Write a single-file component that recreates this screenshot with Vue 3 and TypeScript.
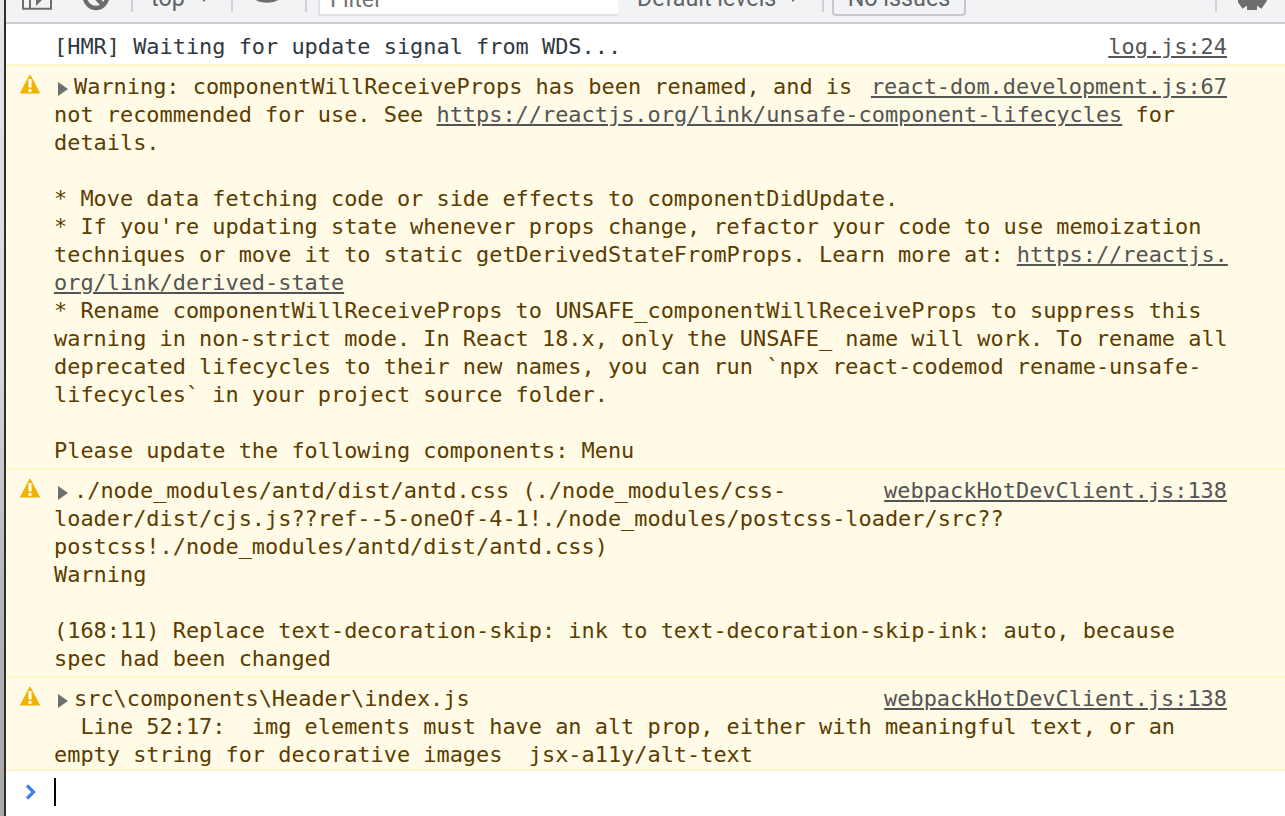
<script setup lang="ts">
interface Row {
  warn: boolean
  arrow: boolean
  source: string
  lines: string[]
}

const rows: Row[] = [
  { warn: false, arrow: false, source: 'log.js:24', lines: ['[HMR] Waiting for update signal from WDS...'] },
  {
    warn: true,
    arrow: true,
    source: 'react-dom.development.js:67',
    lines: [
      'Warning: componentWillReceiveProps has been renamed, and is',
      'not recommended for use. See <u>https://reactjs.org/link/unsafe-component-lifecycles</u> for',
      'details.',
      '',
      '* Move data fetching code or side effects to componentDidUpdate.',
      "* If you're updating state whenever props change, refactor your code to use memoization",
      'techniques or move it to static getDerivedStateFromProps. Learn more at: <u>https://reactjs.</u>',
      '<u>org/link/derived-state</u>',
      '* Rename componentWillReceiveProps to UNSAFE_componentWillReceiveProps to suppress this',
      'warning in non-strict mode. In React 18.x, only the UNSAFE_ name will work. To rename all',
      'deprecated lifecycles to their new names, you can run `npx react-codemod rename-unsafe-',
      'lifecycles` in your project source folder.',
      '',
      'Please update the following components: Menu',
    ],
  },
  {
    warn: true,
    arrow: true,
    source: 'webpackHotDevClient.js:138',
    lines: [
      './node_modules/antd/dist/antd.css (./node_modules/css-',
      'loader/dist/cjs.js??ref--5-oneOf-4-1!./node_modules/postcss-loader/src??',
      'postcss!./node_modules/antd/dist/antd.css)',
      'Warning',
      '',
      '(168:11) Replace text-decoration-skip: ink to text-decoration-skip-ink: auto, because',
      'spec had been changed',
    ],
  },
  {
    warn: true,
    arrow: true,
    source: 'webpackHotDevClient.js:138',
    lines: [
      'src\\components\\Header\\index.js',
      '  Line 52:17:  img elements must have an alt prop, either with meaningful text, or an',
      'empty string for decorative images  jsx-a11y/alt-text',
    ],
  },
]
</script>

<template>
  <div class="screen">
    <div class="devtools">
      <div class="toolbar">
        <svg class="icon dock" width="30" height="10" viewBox="0 0 30 10">
          <path d="M1 -10V8.800H29V-10M8 -10V8.800" fill="none" stroke="#6e6e6e" stroke-width="2" />
          <path d="M14 -3h9l-9 9z" fill="#6e6e6e" />
        </svg>
        <svg class="icon clear" width="30" height="11" viewBox="0 0 30 11">
          <circle cx="15" cy="-3" r="11" fill="none" stroke="#6e6e6e" stroke-width="4.500" />
          <path d="M6 -12 23 6" stroke="#6e6e6e" stroke-width="4.500" />
        </svg>
        <span class="sep"></span>
        <div class="select context">
          <span class="tb-text">top</span>
          <span class="caret-down"></span>
        </div>
        <span class="sep"></span>
        <svg class="icon eye" width="32" height="7" viewBox="0 0 32 7">
          <path d="M2 -6C7 3 25 3 30 -6" fill="none" stroke="#6e6e6e" stroke-width="4" />
          <circle cx="16" cy="-6" r="6" fill="#6e6e6e" />
        </svg>
        <span class="sep"></span>
        <div class="filter"><span class="tb-text filter-text">Filter</span></div>
        <div class="select levels">
          <span class="tb-text">Default levels</span>
          <span class="caret-down"></span>
        </div>
        <span class="sep"></span>
        <div class="issues"><span class="tb-text">No issues</span></div>
        <span class="sep last-sep"></span>
        <svg class="icon gear" width="30" height="11" viewBox="0 0 30 11">
          <g fill="#6e6e6e">
            <circle cx="14" cy="-4" r="11" />
            <rect x="9" y="-4" width="10" height="14" />
            <rect x="9" y="-4" width="10" height="15" transform="rotate(55 14 -4)" />
            <rect x="9" y="-4" width="10" height="15" transform="rotate(-55 14 -4)" />
          </g>
        </svg>
      </div>
      <div class="log">
        <div
          v-for="(row, i) in rows"
          :key="i"
          class="row"
          :class="{ warn: row.warn, tight: i === rows.length - 1 }"
        >
          <svg v-if="row.warn" class="warn-icon" width="20" height="20" viewBox="0 0 20 20">
            <path d="M10 1 19.500 19H.5z" fill="#f2b200" stroke="#f2b200" stroke-linejoin="round" />
            <rect x="8.500" y="5" width="3" height="8.500" fill="#fff" />
            <rect x="8.500" y="15" width="3" height="3" fill="#fff" />
          </svg>
          <a class="source">{{ row.source }}</a>
          <div class="message">
            <div v-for="(line, j) in row.lines" :key="j" class="line">
              <span v-if="row.arrow && j === 0" class="arrow"></span><span v-html="line"></span>
            </div>
          </div>
        </div>
        <div class="prompt">
          <svg width="12" height="16" viewBox="0 0 12 16">
            <path d="M2 1.500 8.500 8 2 14.500" fill="none" stroke="#3b7ff0" stroke-width="3.200" />
          </svg>
          <span class="caret"></span>
        </div>
      </div>
    </div>
  </div>
</template>

<style>
html, body { margin: 0; background: #fff; }
</style>

<style scoped>
.screen {
  width: 1285px;
  height: 816px;
  box-sizing: border-box;
  padding-left: 4px;
  background: linear-gradient(#e6e6e6 0, #d8d8d8 45%, #b4b4b4 75%, #a8a8a8 100%);
  overflow: hidden;
}
.devtools {
  height: 100%;
  border-left: 2px solid #2e2e2e;
  overflow: hidden;
  font-family: "DejaVu Sans Mono", monospace;
  font-size: 21.92px;
  line-height: 28px;
  color: #303942;
  background: #fff;
}
.toolbar {
  display: flex;
  align-items: flex-start;
  height: 22px;
  background: #f1f3f4;
  border-bottom: 2px solid #cbcdd1;
  overflow: hidden;
  font-family: Roboto, sans-serif;
  font-size: 23.300px;
  line-height: 22px;
  color: #5f6368;
}
.icon { display: block; flex: none; }
.dock { margin-left: 16px; }
.clear { margin-left: 29px; }
.eye { margin-left: 18px; }
.gear { margin-left: 21px; }
.sep {
  flex: none;
  width: 2px;
  height: 12px;
  background: #cfd1d4;
}
.clear + .sep { margin-left: 20px; }
.eye + .sep { margin-left: 22px; }
.last-sep { margin-left: 249px; }
.tb-text {
  display: block;
  margin-top: -13px;
  white-space: nowrap;
}
.select {
  display: flex;
  justify-content: space-between;
  box-sizing: border-box;
  flex: none;
  height: 22px;
}
.context { width: 98px; padding: 0 24px 0 18px; }
.levels { width: 204px; padding: 0 26px 0 19px; }
.caret-down {
  width: 0;
  height: 0;
  margin-top: -2px;
  border-left: 3px solid transparent;
  border-right: 3px solid transparent;
  border-top: 4px solid #6e6e6e;
}
.filter {
  flex: none;
  box-sizing: border-box;
  width: 300px;
  height: 16px;
  margin-left: 11px;
  padding-left: 10px;
  background: #fff;
  border-left: 2px solid #dfe1e4;
  border-bottom: 2px solid #dfe1e4;
}
.filter-text {
  margin-top: -12px;
  color: #757575;
}
.issues {
  flex: none;
  box-sizing: border-box;
  display: flex;
  justify-content: center;
  width: 134px;
  height: 16px;
  margin-left: 8px;
  border: 2px solid #c5c7ca;
  border-top: none;
  border-radius: 0 0 4px 4px;
}
.row {
  position: relative;
  padding: 9px 58px 3px 48px;
  min-height: 28px;
}
.row.warn {
  background: #fffbe6;
  color: #5c3c00;
  border-top: 2px solid #fff5c8;
  padding-top: 7px;
  padding-bottom: 3px;
}
.row.warn.tight {
  padding-bottom: 0;
}
.warn-icon {
  position: absolute;
  left: 14px;
  top: 8px;
}
.source {
  float: right;
  color: #545454;
  text-decoration: underline;
  margin-left: 18px;
}
.line {
  min-height: 28px;
  white-space: pre;
}
.line :deep(u) {
  color: #545454;
}
.arrow {
  display: inline-block;
  width: 0;
  height: 0;
  border-left: 10px solid #6e6e6e;
  border-top: 7px solid transparent;
  border-bottom: 7px solid transparent;
  margin: 0 6px 0 4px;
  vertical-align: -2px;
}
.prompt {
  display: flex;
  align-items: center;
  gap: 17px;
  border-top: 2px solid #fff5c8;
  height: 42px;
  padding-left: 19px;
}
.caret {
  width: 2px;
  height: 28px;
  background: #000;
}
</style>
